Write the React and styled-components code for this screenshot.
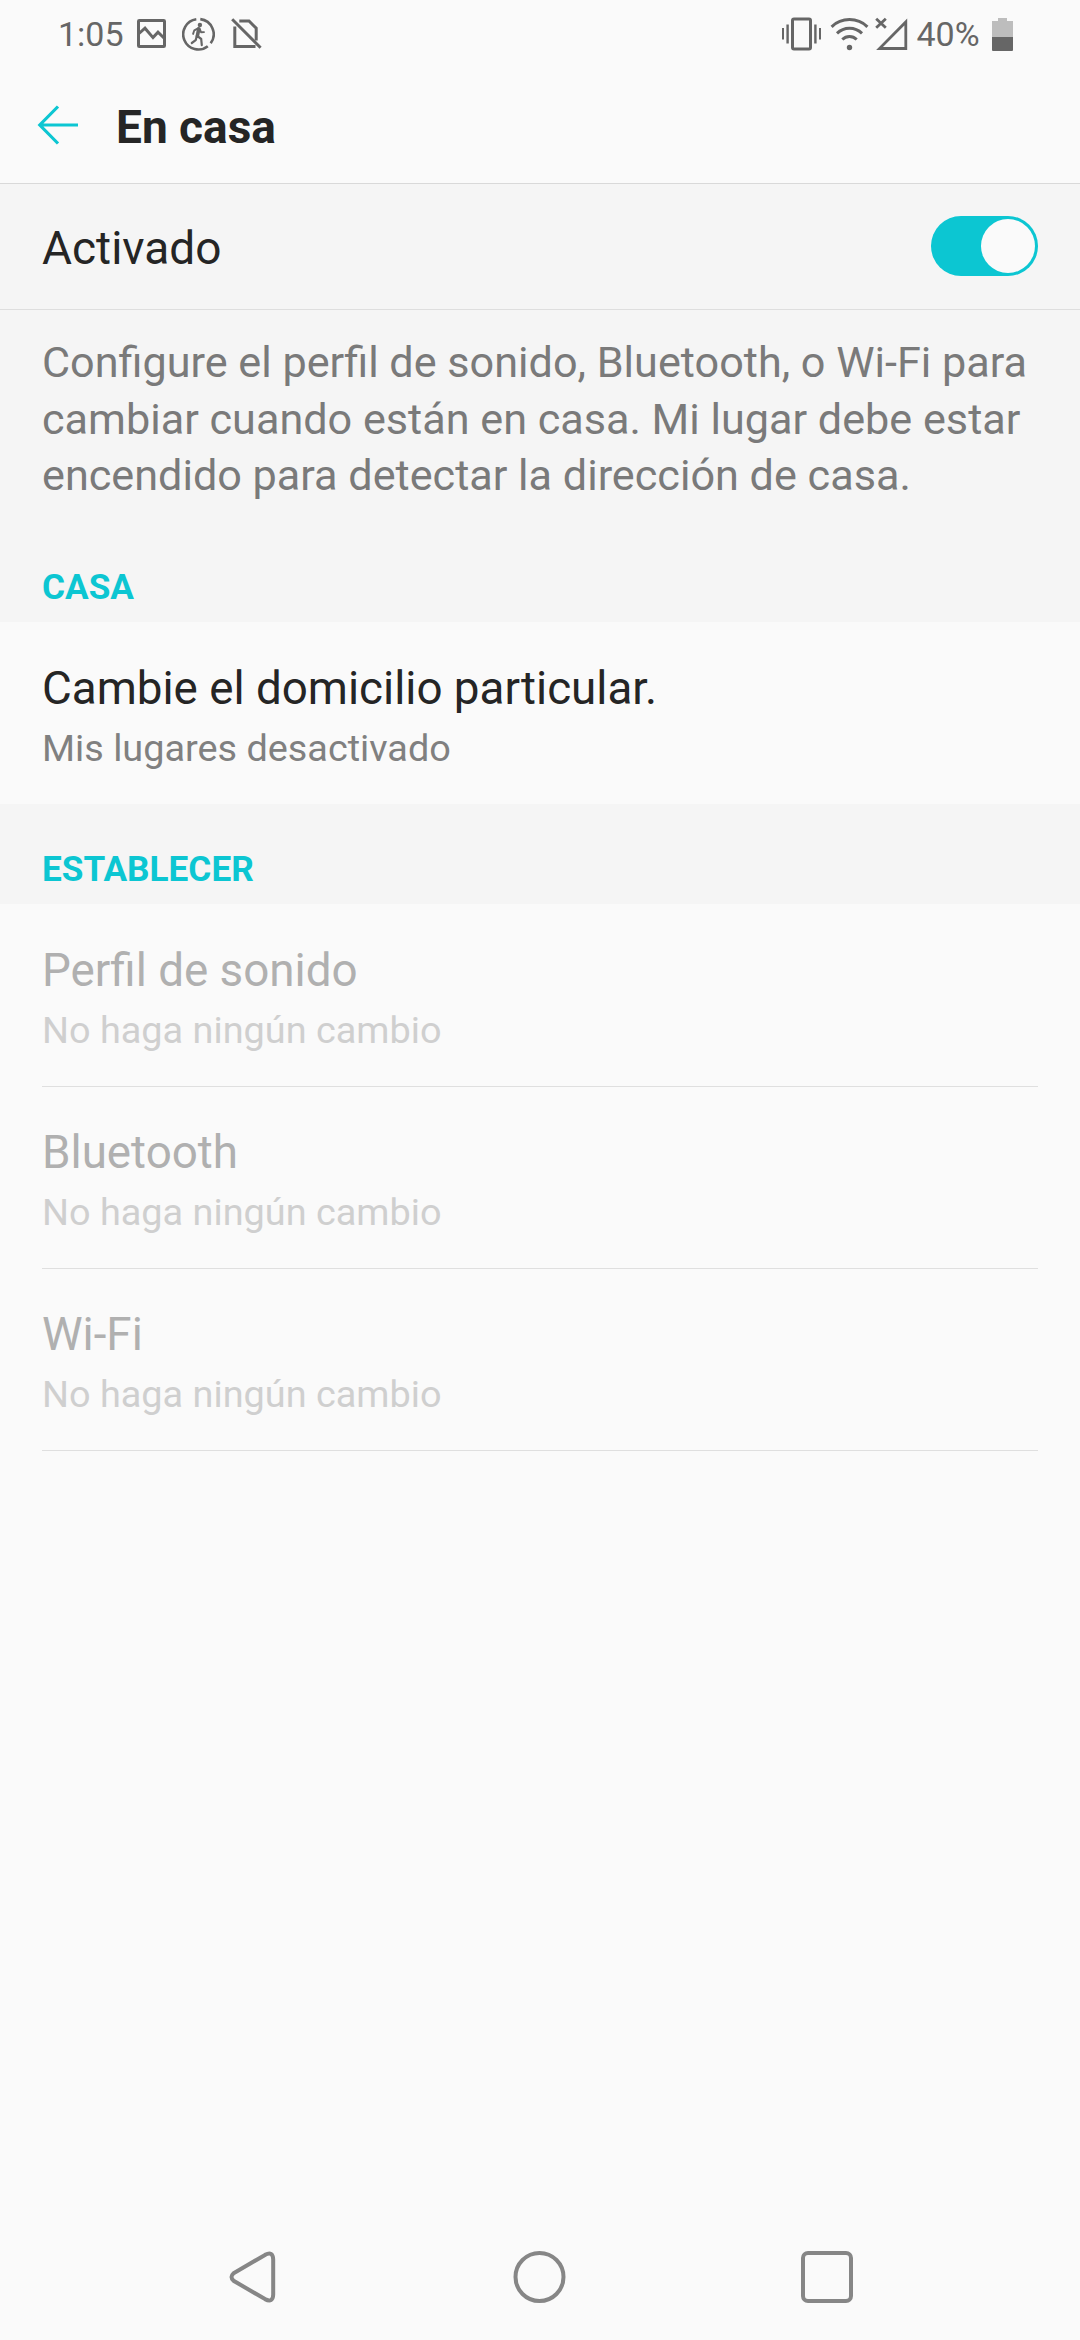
import React from "react";
import styled, { createGlobalStyle } from "styled-components";

const GlobalStyle = createGlobalStyle`
  * { box-sizing: border-box; }
  html, body { margin: 0; padding: 0; background: #fafafa; }
`;

const Screen = styled.div`
  display: flex;
  flex-direction: column;
  width: 1080px;
  height: 2340px;
  background: #fafafa;
  color: #252525;
  font-family: Roboto, "Noto Sans", sans-serif;
  overflow: hidden;
`;

const StatusBar = styled.div`
  display: flex;
  justify-content: space-between;
  height: 67px;
  padding: 0 67px 0 58px;
  color: #666666;
`;

const StatusGroup = styled.div`
  display: flex;
  align-items: center;
`;

const StatusText = styled.span`
  width: ${(p) => p.$width}px;
  font-size: 34px;
  line-height: 40px;
  white-space: nowrap;
`;

const StatusIcon = styled.svg`
  display: block;
  flex: none;
  margin-left: ${(p) => p.$gap || 0}px;
`;

const AppBar = styled.header`
  display: flex;
  align-items: center;
  height: 117px;
  border-bottom: 1px solid #d9d9d9;
  padding-left: 36px;
  gap: 36px;
`;

const BackButton = styled.button`
  display: flex;
  width: 44px;
  height: 44px;
  padding: 0;
  border: 0;
  background: none;
  color: #0cc6d2;
`;

const Title = styled.h1`
  margin: 3px 0 0;
  font-size: 46px;
  line-height: 54px;
  font-weight: 700;
`;

const SwitchRow = styled.div`
  display: flex;
  align-items: flex-start;
  justify-content: space-between;
  height: 126px;
  padding: 32px 42px 0;
  background: #f5f5f5;
  border-bottom: 1px solid #dedede;
`;

const SwitchLabel = styled.span`
  margin-top: 5px;
  font-size: 46px;
  line-height: 54px;
`;

const Track = styled.div`
  display: flex;
  justify-content: flex-end;
  width: 107px;
  height: 60px;
  padding: 3px;
  border-radius: 30px;
  background: #0cc6d2;
`;

const Thumb = styled.div`
  width: 54px;
  height: 54px;
  border-radius: 50%;
  background: #fafafa;
`;

const Description = styled.p`
  margin: 0;
  height: 212px;
  padding: 25px 40px 0 42px;
  background: #f5f5f5;
  color: #7a7a7a;
  font-size: 43.18px;
  line-height: 56.5px;
`;

const SectionHeader = styled.h2`
  display: flex;
  align-items: flex-end;
  height: 100px;
  margin: 0;
  padding: 0 42px 14px;
  background: #f5f5f5;
  color: #0cc6d2;
  font-size: 35.2px;
  line-height: 42px;
  font-weight: 700;
`;

const Row = styled.div`
  display: flex;
  flex-direction: column;
  gap: 9px;
  height: 182px;
  padding: 40px 42px 0;
`;

const RowTitle = styled.span`
  font-size: 45.75px;
  line-height: 54px;
  color: ${(p) => (p.$disabled ? "#b0b0b0" : "#252525")};
`;

const RowSummary = styled.span`
  font-size: 37.85px;
  line-height: 46px;
  color: ${(p) => (p.$disabled ? "#cfcfcf" : "#808080")};
`;

const Divider = styled.div`
  flex: none;
  height: 1px;
  margin: 0 42px -1px;
  background: #dfdfdf;
`;

const NavBar = styled.nav`
  display: flex;
  justify-content: space-between;
  align-items: center;
  height: 126px;
  margin-top: auto;
  padding: 0 224px;
  color: #868686;
`;

const NavIcon = styled.svg`
  display: block;
  width: 60px;
  height: 60px;
`;

function ImageIcon() {
  return (
    <StatusIcon $gap={12} width="29" height="34" viewBox="0 0 29 34" fill="none" stroke="currentColor">
      <rect x="1.5" y="3.5" width="26" height="26" rx="0.8" strokeWidth="3" />
      <path d="M2 16.5 L8 11.2 L16 20.6 L21 15.2 L27.5 21.5" strokeWidth="3" />
    </StatusIcon>
  );
}

function RunnerIcon() {
  return (
    <StatusIcon $gap={16} width="33" height="34" viewBox="0 0 33 34" fill="none" stroke="currentColor" strokeLinecap="round" strokeLinejoin="round">
      <g strokeWidth="2.6" strokeLinecap="butt">
        <path d="M14.3 2.2 A15.2 15.2 0 1 0 25.8 29.2" />
        <path d="M18.3 2.1 A15.2 15.2 0 0 1 28.7 26.2" />
      </g>
      <circle cx="17.9" cy="8" r="2.2" fill="currentColor" stroke="none" />
      <path d="M16.8 11.7 L15.4 18.8" strokeWidth="3.6" />
      <path d="M16 11.4 L12.3 13.3 L11.1 16.9 M17.8 12.2 L19 15.2 L22 15.1" strokeWidth="1.9" />
      <path d="M15.5 19.2 L19.2 22 L19.8 28.2 M14.6 19.4 L13.7 23.2 L9.8 26" strokeWidth="2.2" />
    </StatusIcon>
  );
}

function NoSimIcon() {
  return (
    <StatusIcon $gap={16} width="31" height="34" viewBox="0 0 31 34" fill="none" stroke="currentColor" strokeWidth="3">
      <path d="M1.2 2.3 L29.6 30.8" />
      <path d="M8.3 4 H18 L25.2 11.2 V23.5" />
      <path d="M3.8 9.5 V29.5 H24.5" />
    </StatusIcon>
  );
}

function VibrateIcon() {
  return (
    <StatusIcon width="39" height="34" viewBox="0 0 39 34" fill="none" stroke="currentColor">
      <rect x="10.5" y="2" width="18" height="30" rx="1.5" strokeWidth="3" />
      <path d="M1 11 V22.5 M38 11 V22.5" strokeWidth="2" />
      <path d="M5.6 7.5 V26.5 M33.4 7.5 V26.5" strokeWidth="2.4" />
    </StatusIcon>
  );
}

function WifiIcon() {
  return (
    <StatusIcon $gap={9} width="39" height="34" viewBox="0 0 39 34" fill="none" stroke="currentColor" strokeWidth="3">
      <path d="M1.6 9.8 C11.5 0.2 27.5 0.2 37.4 9.8" />
      <path d="M7 16.3 C14 9.5 25 9.5 32 16.3" />
      <path d="M12.3 22.5 C16.4 18.6 22.6 18.6 26.7 22.5" />
      <circle cx="19.5" cy="30.5" r="2.7" fill="currentColor" stroke="none" />
    </StatusIcon>
  );
}

function SignalIcon() {
  return (
    <StatusIcon $gap={6} width="33" height="34" viewBox="0 0 33 34" fill="none" stroke="currentColor">
      <path d="M4.5 31.5 H30.8 V5 Z" strokeWidth="2.8" strokeMiterlimit="10" />
      <path d="M1.2 1.7 L10.8 10.8 M10.8 1.7 L1.2 10.8" strokeWidth="2.8" />
    </StatusIcon>
  );
}

function BatteryIcon() {
  return (
    <StatusIcon $gap={12} width="21" height="34" viewBox="0 0 21 34">
      <path d="M6 1 H15 V4 H21 V20 H0 V4 H6 Z" fill="#bdbdbd" />
      <path d="M0 20 H21 V33 Q21 34 20 34 H1 Q0 34 0 33 Z" fill="currentColor" />
    </StatusIcon>
  );
}

const profiles = ["Perfil de sonido", "Bluetooth", "Wi-Fi"];

export default function App() {
  return (
    <Screen>
      <GlobalStyle />
      <StatusBar>
        <StatusGroup>
          <StatusText $width={67}>1:05</StatusText>
          <ImageIcon />
          <RunnerIcon />
          <NoSimIcon />
        </StatusGroup>
        <StatusGroup>
          <VibrateIcon />
          <WifiIcon />
          <SignalIcon />
          <StatusText $width={72}>&nbsp;40%</StatusText>
          <BatteryIcon />
        </StatusGroup>
      </StatusBar>
      <AppBar>
        <BackButton aria-label="Atrás">
          <svg width="44" height="44" viewBox="0 0 44 44" fill="none" stroke="currentColor" strokeWidth="3.2">
            <path d="M42 22 H4 M22 3.5 L3.8 22 L22 40.5" />
          </svg>
        </BackButton>
        <Title>En casa</Title>
      </AppBar>
      <SwitchRow>
        <SwitchLabel>Activado</SwitchLabel>
        <Track role="switch" aria-checked="true">
          <Thumb />
        </Track>
      </SwitchRow>
      <Description>
        Configure el perfil de sonido, Bluetooth, o Wi-Fi para cambiar cuando
        están en casa. Mi lugar debe estar encendido para detectar la dirección
        de casa.
      </Description>
      <SectionHeader>CASA</SectionHeader>
      <Row>
        <RowTitle>Cambie el domicilio particular.</RowTitle>
        <RowSummary>Mis lugares desactivado</RowSummary>
      </Row>
      <SectionHeader>ESTABLECER</SectionHeader>
      {profiles.map((name) => (
        <React.Fragment key={name}>
          <Row>
            <RowTitle $disabled>{name}</RowTitle>
            <RowSummary $disabled>No haga ningún cambio</RowSummary>
          </Row>
          <Divider />
        </React.Fragment>
      ))}
      <NavBar>
        <NavIcon viewBox="0 0 60 60" fill="none" stroke="currentColor" strokeWidth="4">
          <path d="M9.6 26.2 L41 7.9 Q49 3.8 49.2 12.5 V47.5 Q49 56.2 41 52.1 L9.6 33.8 Q5.4 30 9.6 26.2 Z" />
        </NavIcon>
        <NavIcon viewBox="0 0 60 60" fill="none" stroke="currentColor" strokeWidth="4">
          <circle cx="29.5" cy="30" r="24" />
        </NavIcon>
        <NavIcon viewBox="0 0 60 60" fill="none" stroke="currentColor" strokeWidth="4">
          <rect x="7" y="6" width="48" height="48" rx="5" />
        </NavIcon>
      </NavBar>
    </Screen>
  );
}
